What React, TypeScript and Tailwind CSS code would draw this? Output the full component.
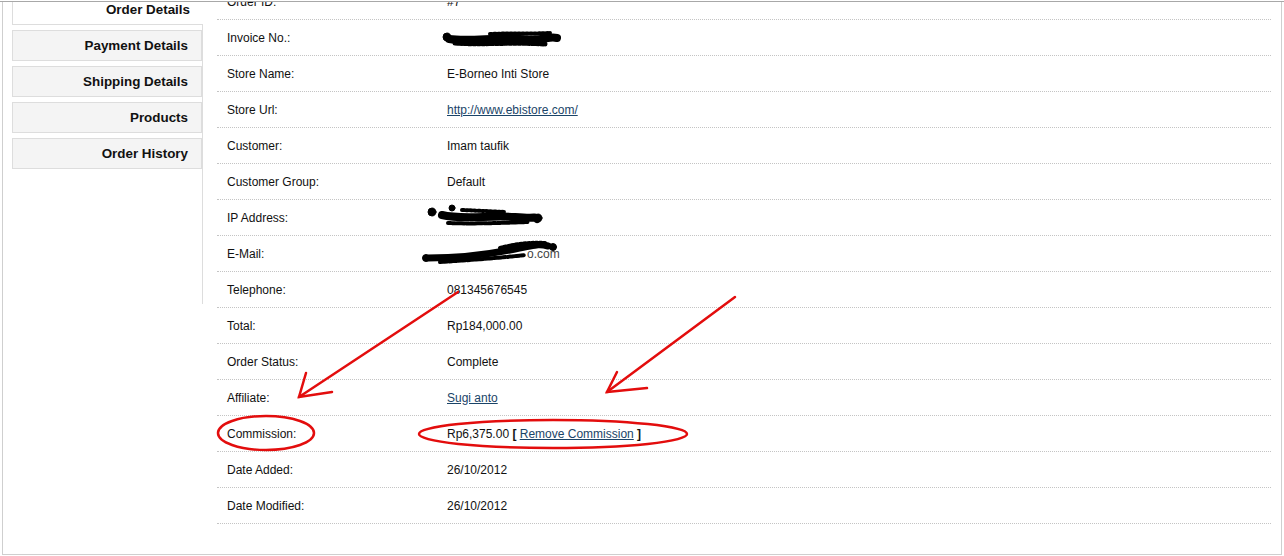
const tabs = [
  { label: "Order Details", active: true },
  { label: "Payment Details" },
  { label: "Shipping Details" },
  { label: "Products" },
  { label: "Order History" },
];

type Row = { label: string; value: React.ReactNode };

const rows: Row[] = [
  { label: "Order ID:", value: "#7" },
  { label: "Invoice No.:", value: "" },
  { label: "Store Name:", value: "E-Borneo Inti Store" },
  {
    label: "Store Url:",
    value: (
      <a href="#" className="text-[#1a4468] underline">
        http://www.ebistore.com/
      </a>
    ),
  },
  { label: "Customer:", value: "Imam taufik" },
  { label: "Customer Group:", value: "Default" },
  { label: "IP Address:", value: "" },
  {
    label: "E-Mail:",
    value: <span className="pl-[80px] text-[#444]">o.com</span>,
  },
  { label: "Telephone:", value: "081345676545" },
  { label: "Total:", value: "Rp184,000.00" },
  { label: "Order Status:", value: "Complete" },
  {
    label: "Affiliate:",
    value: (
      <a href="#" className="text-[#1a4468] underline">
        Sugi anto
      </a>
    ),
  },
  {
    label: "Commission:",
    value: (
      <>
        Rp6,375.00 <b>[</b>{" "}
        <a href="#" className="text-[#1a4468] underline">
          Remove Commission
        </a>{" "}
        <b>]</b>
      </>
    ),
  },
  { label: "Date Added:", value: "26/10/2012" },
  { label: "Date Modified:", value: "26/10/2012" },
];

function Annotations() {
  const red = "#e30d0d";
  return (
    <svg
      className="absolute inset-0 pointer-events-none"
      width={1284}
      height={556}
      viewBox="0 0 1284 556"
    >
      {/* redaction scribbles */}
      <g stroke="#000" strokeLinecap="round" fill="none">
        <path d="M449 39 C470 42 495 37 520 39 S 548 36 557 38" strokeWidth={8} />
        <path d="M455 43 C480 45 510 42 545 44" strokeWidth={5} strokeDasharray="3 1.5" />
        <path d="M490 34 C510 33 530 34 550 33" strokeWidth={4} strokeDasharray="2 2" />
        <circle cx={447} cy={37} r={4} fill="#000" />
        <path d="M442 215 C462 220 490 215 515 217 S 533 216 537 219" strokeWidth={8} />
        <path d="M448 223 C470 224 500 223 528 222" strokeWidth={4} strokeDasharray="3 1.5" />
        <path d="M462 210 L 505 212" strokeWidth={4} strokeDasharray="2 2" />
        <circle cx={432} cy={212} r={4} fill="#000" />
        <circle cx={452} cy={208} r={3} fill="#000" />
        <circle cx={538} cy={218} r={4} fill="#000" />
        <path d="M428 258 C460 258 490 254 515 249 S 540 244 548 246" strokeWidth={7} />
        <path d="M440 262 C470 260 500 258 525 255" strokeWidth={4} strokeDasharray="3 1.5" />
        <path d="M500 248 C515 244 530 242 545 243" strokeWidth={4} strokeDasharray="2 2" />
        <circle cx={426} cy={258} r={3.5} fill="#000" />
        <circle cx={553} cy={247} r={3.5} fill="#000" />
      </g>
      {/* arrows */}
      <g stroke={red} strokeWidth={2.5} strokeLinecap="round" fill="none">
        <path d="M458 292 L 299 397" />
        <path d="M306 373 L 299 397 L 332 392" />
        <path d="M735 297 L 607 392" />
        <path d="M617 372 L 607 392 L 647 388" />
        <ellipse cx={266} cy={433} rx={48} ry={17} />
        <ellipse cx={553} cy={434} rx={134} ry={14} />
      </g>
    </svg>
  );
}

export default function App() {
  return (
    <div className="relative w-[1284px] h-[556px] overflow-hidden bg-white font-['Liberation_Sans',Arial,sans-serif]">
      <div className="mt-px border-t border-[#a8a8a8]">
        <div className="ml-[2px] w-[1280px] h-[553px] overflow-hidden border-l border-r border-b border-[#cfcfcf]">
          <div className="flex items-start">
            <div className="ml-[9px] mt-[-8px] w-[191px] h-[310px] border-r border-[#dddddd] flex flex-col gap-[5px]">
              {tabs.map((t) => (
                <div
                  key={t.label}
                  className={`h-[31px] flex items-center justify-end pr-[13px] text-[13.4px] font-bold text-[#111] border border-[#dddddd] ${
                    t.active ? "bg-white border-r-0 border-t-0 mr-[-1px] pt-[2px]" : "bg-[#f4f4f4] pt-[2px]"
                  }`}
                >
                  {t.label}
                </div>
              ))}
            </div>
            <div className="ml-[14px] mt-[-18px] w-[1054px]">
              {rows.map((r) => (
                <div
                  key={r.label}
                  className="flex items-center h-[36px] border-b border-dotted border-[#c4c4c4] text-[12px] text-[#111]"
                >
                  <div className="w-[220px] pl-[10px]">{r.label}</div>
                  <div className="pl-[10px]">{r.value}</div>
                </div>
              ))}
            </div>
          </div>
        </div>
      </div>
      <Annotations />
    </div>
  );
}
